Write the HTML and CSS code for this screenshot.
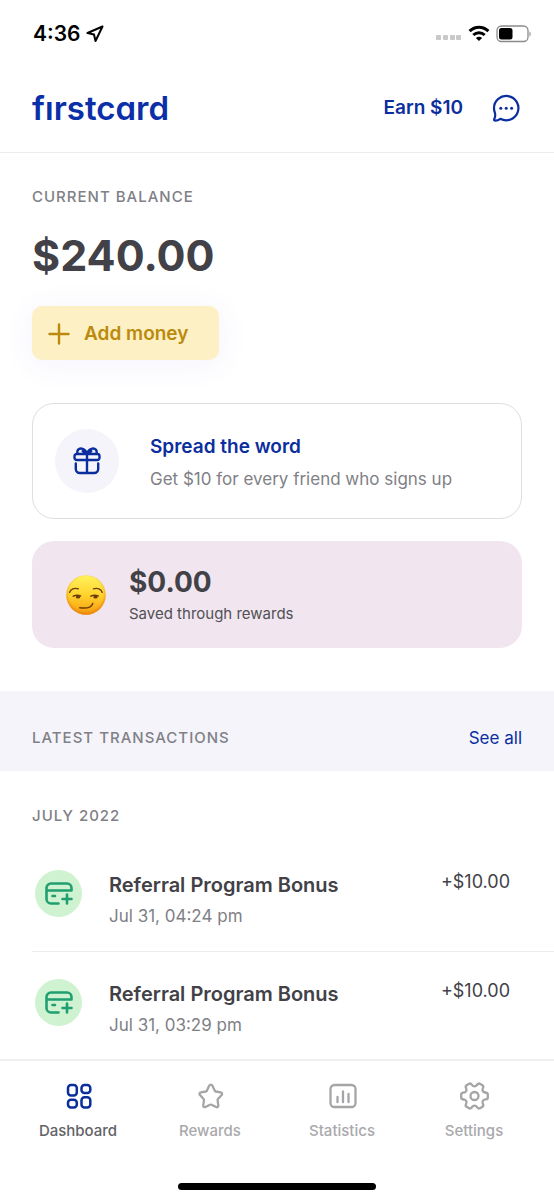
FILE: index.html
```html
<!DOCTYPE html>
<html lang="en">
<head>
<meta charset="utf-8">
<meta name="viewport" content="width=device-width, initial-scale=1">
<title>firstcard</title>
<link rel="stylesheet" href="styles.css">
</head>
<body>
<div class="app">
  <div class="status">
    <div class="status-group">
      <span class="clock">4:36</span>
      <svg class="locate" width="18" height="18" viewBox="0 0 18 18" aria-hidden="true"><path d="M16.500 1.500 1.500 8 8 9.500 9.500 16Z"/></svg>
    </div>
    <div class="status-group status-right">
      <svg width="26" height="6" viewBox="0 0 26 6" fill="#c9c9c9" aria-hidden="true"><rect x="0" y="0" width="5" height="5" rx="1"/><rect x="7" y="0" width="5" height="5" rx="1"/><rect x="14" y="0" width="5" height="5" rx="1"/><rect x="20" y="0" width="5" height="5" rx="1"/></svg>
      <svg width="22" height="17" viewBox="0 0 22 17" fill="none" stroke="#000" stroke-width="3" aria-hidden="true"><path d="M1.600 6.100C7 .8 15 .8 20.400 6.100"/><path d="M5.300 10C8.600 6.900 13.400 6.900 16.700 10"/><path d="M11 16 7.900 12.900C9.700 11.400 12.300 11.400 14.100 12.900Z" fill="#000" stroke="none"/></svg>
      <svg width="36" height="18" viewBox="0 0 36 18" aria-hidden="true"><rect x="1" y="1" width="31" height="15.500" rx="4.500" fill="none" stroke="#8b8b8b" stroke-width="1.300"/><rect x="3" y="3" width="13.500" height="11.500" rx="2.500"/><path d="M33.500 6.500c1.600.5 1.600 4.500 0 5z" fill="#8b8b8b"/></svg>
    </div>
  </div>

  <header class="header">
    <h1 class="logo" aria-label="firstcard">fırstcard</h1>
    <div class="header-actions">
      <a class="earn" href="#">Earn $10</a>
      <button class="icon-button" type="button" aria-label="Messages">
        <svg width="30" height="30" viewBox="0 0 30 30" fill="none" stroke="#0b2e9e" stroke-width="2.200" stroke-linejoin="round" aria-hidden="true"><path d="M3 15.200A12.200 12.200 0 1 1 9.300 25.800C7.600 27 5.500 27.700 3.700 27.500 3 27.400 3 26.700 3.300 26.100 4.600 23.600 4.500 22 3.900 19.800A12.200 12.200 0 0 1 3 15.200Z"/><g fill="#0b2e9e" stroke="none"><circle cx="9.800" cy="15.300" r="1.500"/><circle cx="15.200" cy="15.300" r="1.500"/><circle cx="20.600" cy="15.300" r="1.500"/></g></svg>
      </button>
    </div>
  </header>

  <main class="content">
    <section class="overview">
      <h2 class="label">CURRENT BALANCE</h2>
      <p class="balance">$240.00</p>
      <button class="add-money" type="button">
        <svg width="22" height="22" viewBox="0 0 22 22" stroke="#bb8a0c" stroke-width="2.400" stroke-linecap="round" aria-hidden="true"><path d="M11 1.500v19M1.500 11h19"/></svg>
        <span>Add money</span>
      </button>

      <a class="card referral" href="#">
        <span class="referral-icon">
          <svg width="28" height="28" viewBox="0 0 28 28" fill="none" stroke="#0b2e9e" stroke-width="2.400" stroke-linejoin="round" stroke-linecap="round" aria-hidden="true"><rect x="1.500" y="7" width="25" height="6" rx="2.200"/><path d="M14 7v19M2.800 16.500V22a4 4 0 0 0 4 4h14.400a4 4 0 0 0 4-4v-5.500M4.600 6.600C3.400 3.400 6 .9 8.800 1.600 11.600 2.300 13.300 4.400 14 6.600 14.700 4.400 16.400 2.300 19.200 1.600 22 .9 24.600 3.400 23.400 6.600M9.800 4.200 12.400 6.800M18.200 4.200 15.600 6.800"/></svg>
        </span>
        <span class="card-text">
          <span class="referral-title">Spread the word</span>
          <span class="referral-note">Get $10 for every friend who signs up</span>
        </span>
      </a>

      <div class="card savings">
        <svg class="emoji" width="40" height="40" viewBox="0 0 40 40" role="img" aria-label="Smirking face">
          <defs>
            <linearGradient id="face" x1="0" y1="0" x2="0" y2="1"><stop offset="0" stop-color="#fff25c"/><stop offset=".5" stop-color="#ffd32d"/><stop offset="1" stop-color="#f79a0e"/></linearGradient>
            <radialGradient id="rim" cx=".5" cy=".46" r=".54"><stop offset=".8" stop-color="#e8860a" stop-opacity="0"/><stop offset="1" stop-color="#df7a08" stop-opacity=".75"/></radialGradient>
          </defs>
          <circle cx="20" cy="20" r="19.700" fill="url(#face)"/><circle cx="20" cy="20" r="19.700" fill="url(#rim)"/>
          <g fill="none" stroke="#6b3b08" stroke-linecap="round"><path d="M3.600 17.500c1-3.400 4.800-5 8.800-3.600M27.400 13.900c4-1.400 7.800.2 8.800 3.600" stroke-width="1.300"/><path d="M7.200 21.100c2.600-1.200 5-1.200 7.400-.2M24.800 21.100c2.600-1.200 5-1.200 7.400-.2M13.800 32.800c6 .8 11.800-.4 13-4.400" stroke-width="1.500"/></g>
          <g fill="#6b3b08"><ellipse cx="12" cy="22" rx="2.200" ry="1.500"/><ellipse cx="29.500" cy="22" rx="2.200" ry="1.500"/></g>
        </svg>
        <div class="card-text">
          <strong class="saved-amount">$0.00</strong>
          <span class="saved-note">Saved through rewards</span>
        </div>
      </div>
    </section>

    <div class="band">
      <h2 class="label">LATEST TRANSACTIONS</h2>
      <a class="see-all" href="#">See all</a>
    </div>

    <section class="transactions">
      <h3 class="label month">JULY 2022</h3>
      <ul class="list">
        <li class="item">
          <span class="item-icon"><svg width="30" height="26" viewBox="0 0 30 26" fill="none" stroke="#219f70" stroke-width="2.600" stroke-linecap="round" stroke-linejoin="round" aria-hidden="true"><path d="M14.500 22.500H7a4.500 4.500 0 0 1-4.500-4.500V7A4.500 4.500 0 0 1 7 2.500h16A4.500 4.500 0 0 1 27.500 7v2.500H2.500M8.500 15h2.500M23 13.500v9M18.500 18h9"/></svg></span>
          <div class="item-text"><span class="item-title">Referral Program Bonus</span><time class="item-date">Jul 31, 04:24 pm</time></div>
          <span class="item-amount">+$10.00</span>
        </li>
        <li class="item">
          <span class="item-icon"><svg width="30" height="26" viewBox="0 0 30 26" fill="none" stroke="#219f70" stroke-width="2.600" stroke-linecap="round" stroke-linejoin="round" aria-hidden="true"><path d="M14.500 22.500H7a4.500 4.500 0 0 1-4.500-4.500V7A4.500 4.500 0 0 1 7 2.500h16A4.500 4.500 0 0 1 27.500 7v2.500H2.500M8.500 15h2.500M23 13.500v9M18.500 18h9"/></svg></span>
          <div class="item-text"><span class="item-title">Referral Program Bonus</span><time class="item-date">Jul 31, 03:29 pm</time></div>
          <span class="item-amount">+$10.00</span>
        </li>
      </ul>
    </section>
  </main>

  <nav class="tabs" aria-label="Main">
    <a class="tab tab-active" href="#" aria-current="page">
      <svg width="30" height="30" viewBox="0 0 30 30" fill="none" stroke="#0b2e9e" stroke-width="2.500" aria-hidden="true"><rect x="5" y="4" width="8.800" height="10.500" rx="3"/><rect x="18.500" y="4" width="8.800" height="8" rx="3"/><rect x="5" y="18.800" width="8.800" height="7.800" rx="3"/><rect x="18.500" y="16.200" width="8.800" height="10.400" rx="3"/></svg>
      <span>Dashboard</span>
    </a>
    <a class="tab" href="#">
      <svg width="30" height="30" viewBox="0 0 30 30" fill="none" stroke="#a5a5a8" stroke-width="2.300" stroke-linejoin="round" aria-hidden="true"><path d="M17.300 4.500 19.800 9.700c.2.500.6.700 1.100.8l4.800.8c1.400.2 1.900 1.800.9 2.800l-3.600 4c-.4.400-.5.800-.4 1.300l.7 5c.2 1.400-1.100 2.200-2.200 1.600l-4.600-2.200c-.5-.2-1-.2-1.500 0L10.400 26c-1.200.6-2.500-.3-2.200-1.600l.8-5c.1-.5 0-1-.4-1.300l-3.600-4c-1-1-.5-2.600.9-2.800l4.800-.8c.5-.1.900-.3 1.100-.8l2.500-5.200c.7-1.300 2.300-1.300 3 0Z"/></svg>
      <span>Rewards</span>
    </a>
    <a class="tab" href="#">
      <svg width="30" height="30" viewBox="0 0 30 30" fill="none" stroke="#a5a5a8" stroke-width="2.300" stroke-linecap="round" aria-hidden="true"><rect x="3.500" y="4" width="25" height="22" rx="4"/><path d="M10.500 16v5.200M16 10.500v10.700M21.500 13v8.200"/></svg>
      <span>Statistics</span>
    </a>
    <a class="tab" href="#">
      <svg width="30" height="30" viewBox="-15.500 -15 30 30" fill="none" stroke="#a5a5a8" stroke-width="2.300" stroke-linecap="round" aria-hidden="true">
        <defs><path id="tooth" d="M11.300-3.300Q13.300-3.100 13.300-1.400V1.400Q13.300 3.100 11.300 3.300C8.300 3.600 7.300 5.400 8.500 8.100"/></defs>
        <circle r="4"/>
        <use href="#tooth"/><use href="#tooth" transform="rotate(60)"/><use href="#tooth" transform="rotate(120)"/><use href="#tooth" transform="rotate(180)"/><use href="#tooth" transform="rotate(240)"/><use href="#tooth" transform="rotate(300)"/>
      </svg>
      <span>Settings</span>
    </a>
  </nav>
  <div class="home-area"><span class="home-bar"></span></div>
</div>
</body>
</html>
```

FILE: styles.css
```css
* { box-sizing: border-box; }

body {
  margin: 0;
  background: #fff;
  color: #414147;
  font-family: Inter, "Liberation Sans", sans-serif;
}

h1, h2, h3, p, ul { margin: 0; padding: 0; }
ul { list-style: none; }
a { color: inherit; text-decoration: none; }
button { font: inherit; border: 0; background: none; padding: 0; cursor: pointer; }
svg { display: block; flex: none; }

.app { min-height: 100vh; display: flex; flex-direction: column; }

.status {
  display: flex;
  justify-content: space-between;
  align-items: center;
  height: 64px;
  padding: 3px 22px 0 33px;
}
.status-group { display: flex; align-items: center; gap: 6px; }
.status-right svg:first-child { margin-top: 8px; }
.clock { font-size: 21px; line-height: 28px; font-weight: 600; color: #000; }
.locate { fill: none; stroke: #000; stroke-width: 2; stroke-linejoin: round; }

.header {
  display: flex;
  justify-content: space-between;
  align-items: center;
  height: 89px;
  padding: 0 33px 0 32px;
  border-bottom: 1px solid #ececee;
}
.logo {
  font-size: 33px;
  line-height: 40px;
  font-weight: 600;
  color: #0b2fa8;
  font-feature-settings: "cv11";
}
.header-actions { display: flex; align-items: center; gap: 28px; color: #0b2e9e; }
.earn { font-size: 19px; line-height: 24px; font-weight: 600; }

.content { flex: 1; }
.overview { padding: 32px 32px 43px; }
.label {
  font-size: 15px;
  line-height: 24px;
  font-weight: 500;
  letter-spacing: 1px;
  color: #808086;
}
.balance { margin-top: 18px; font-size: 43px; line-height: 56px; font-weight: 700; }
.add-money {
  display: flex;
  align-items: center;
  gap: 14px;
  height: 54px;
  margin-top: 23px;
  padding: 1px 31px 0 16px;
  border-radius: 10px;
  background: #fcf0c4;
  box-shadow: 0 4px 32px rgba(90, 90, 230, 0.07);
  color: #bb8a0c;
  font-size: 19px;
  line-height: 24px;
  font-weight: 600;
}

.card { display: flex; align-items: center; border-radius: 22px; }
.card-text { display: flex; flex-direction: column; padding-top: 3px; }
.referral {
  gap: 31px;
  height: 116px;
  margin-top: 43px;
  padding: 0 22px;
  border: 1px solid #dedee1;
  background: #fff;
}
.referral-icon {
  display: grid;
  place-items: center;
  width: 64px;
  height: 64px;
  border-radius: 50%;
  background: #f4f4fa;
}
.referral-title { font-size: 19px; line-height: 32px; font-weight: 600; color: #0b2e9e; }
.referral-note { font-size: 17px; line-height: 32px; color: #808086; }

.savings {
  gap: 23px;
  height: 107px;
  margin-top: 22px;
  padding: 0 34px;
  background: #f1e6ef;
}
.saved-amount { font-size: 28px; line-height: 36px; font-weight: 700; }
.saved-note { font-size: 15px; line-height: 28px; color: #505055; }

.band {
  display: flex;
  justify-content: space-between;
  align-items: center;
  height: 80px;
  padding: 14px 32px 0;
  background: #f4f4fa;
}
.see-all { font-size: 17px; line-height: 24px; color: #0b2e9e; }

.month { padding: 33px 32px 0; }
.list { padding-left: 32px; margin-top: 15px; }
.item {
  display: flex;
  align-items: flex-start;
  height: 108px;
  padding: 27px 44px 0 3px;
}
.item + .item { border-top: 1px solid #ececee; }
.item-icon {
  display: grid;
  place-items: center;
  width: 47px;
  height: 47px;
  margin-right: 27px;
  border-radius: 50%;
  background: #cff2d0;
}
.item-text { display: flex; flex: 1; flex-direction: column; }
.item-title { font-size: 20px; line-height: 30px; font-weight: 600; }
.item-date { font-size: 17px; line-height: 32px; color: #808086; }
.item-amount { font-size: 18px; line-height: 24px; }

.tabs {
  display: grid;
  grid-template-columns: repeat(4, 1fr);
  padding: 20px 14px 0 12px;
  border-top: 2px solid #f0f0f2;
}
.tab {
  display: flex;
  flex-direction: column;
  align-items: center;
  gap: 8px;
  font-size: 15px;
  line-height: 24px;
  font-weight: 500;
  color: #a9a9ad;
}
.tab-active { color: #626267; }
.home-area { display: flex; justify-content: center; padding: 40px 0 11px; }
.home-bar { width: 198px; height: 7px; border-radius: 4px; background: #000; }
```
